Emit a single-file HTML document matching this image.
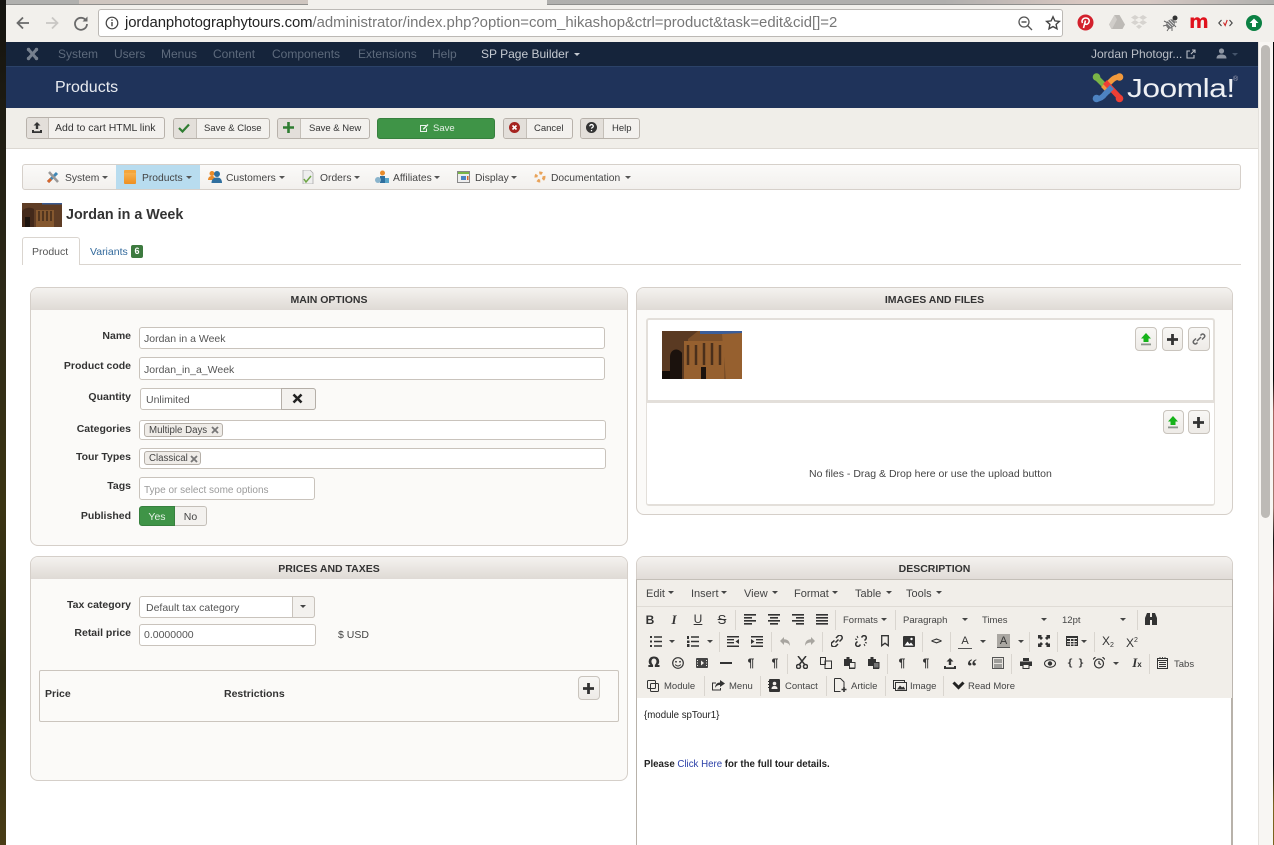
<!DOCTYPE html>
<html><head><meta charset="utf-8"><title>Products</title>
<style>
html,body{margin:0;padding:0;width:1274px;height:845px;overflow:hidden;background:#fff}
body{position:relative;font-family:"Liberation Sans",sans-serif;color:#333;font-size:11px}
div,span,svg{position:absolute;box-sizing:border-box}
.t{white-space:nowrap;line-height:12px;height:12px}
.b{font-weight:bold}
.nav{color:#5d6a7c;font-size:12px;top:48px}
.btn{background:#f3f1ee;border:1px solid #b8b2ab;border-radius:3px;height:21px;top:118px}
.ic{left:0;top:0;bottom:0;background:#e3dfda;border-right:1px solid #c4bfb8;border-radius:2px 0 0 2px;width:23px}
.panel{background:#fbfaf8;border:1px solid #d5cfc9;border-radius:8px;overflow:hidden}
.ph{left:0;right:0;top:0;height:22px;background:linear-gradient(#f4f2ef,#dfdad5);text-align:center;font-weight:bold;font-size:10.5px;line-height:24px;color:#333}
.inp{background:#fff;border:1px solid #c9c3bc;border-radius:3px}
.lb{font-weight:bold;font-size:10.5px;text-align:right;width:100px;left:31px;color:#333}
.val{font-size:10.5px;color:#555}
.tag{background:#efece8;border:1px solid #b5afa8;border-radius:3px;height:14px;font-size:9.7px;line-height:13px;padding-left:4px;color:#444;white-space:nowrap}
.sb{background:linear-gradient(#f8f7f5,#eeebe7);border:1px solid #c9c4bd;border-radius:4px;width:20px;height:24px}
.mt{font-size:11px;color:#444;top:588px}
.tb{font-size:9.5px;color:#444}
.sep{width:1px;background:#d9d5cf}
.i{font-size:12px;color:#333;line-height:14px;height:14px;width:16px;text-align:center;white-space:nowrap}
.mn{font-size:10.3px;color:#444;top:173px}
</style></head><body>

<!-- left photo strip -->
<div style="left:0;top:0;width:6px;height:845px;background:linear-gradient(#14130f,#2e2a18 35%,#3b3413 60%,#2c2a12 80%,#4a3d16)"></div>

<!-- browser top -->
<div style="left:6px;top:0;width:1268px;height:5px;background:linear-gradient(90deg,#b0b0ae 0,#b0afad 74%,#d9c8c2 85%,#d6c8c3 90%,#b0b0ae 100%);border-bottom:1px solid #8f8f8d"></div>
<div style="left:79px;top:0;width:229px;height:5px;background:#cfc6c0;border-bottom:1px solid #8f8f8d"></div>
<div style="left:308px;top:0;width:239px;height:5px;background:#f2f0ec"></div>
<div style="left:6px;top:5px;width:1268px;height:37px;background:#f2f0ec"></div>
<svg style="left:14px;top:14px" width="18" height="18" viewBox="0 0 18 18"><path d="M15 9H4M9 3.500L3.500 9 9 14.500" fill="none" stroke="#6a6a6a" stroke-width="1.800"/></svg>
<svg style="left:43px;top:14px" width="18" height="18" viewBox="0 0 18 18"><path d="M3 9h11M9 3.500L14.500 9 9 14.500" fill="none" stroke="#c9c7c4" stroke-width="1.800"/></svg>
<svg style="left:72px;top:14px" width="18" height="18" viewBox="0 0 18 18"><path d="M14 6.500A6 6 0 1 0 15 10" fill="none" stroke="#6a6a6a" stroke-width="1.800"/><path d="M15.500 2.500v5h-5z" fill="#6a6a6a"/></svg>
<div style="left:98px;top:9px;width:965px;height:28px;background:#fff;border:1px solid #bcb9b5;border-radius:3px"></div>
<svg style="left:105px;top:16px" width="14" height="14" viewBox="0 0 14 14"><circle cx="7" cy="7" r="5.800" fill="none" stroke="#444" stroke-width="1.200"/><path d="M7 6v4.200M7 3.500v1.400" stroke="#444" stroke-width="1.400"/></svg>
<div class="t" style="left:125px;top:14px;height:18px;line-height:18px;font-size:14.900px;color:#777"><span style="position:static;color:#222;letter-spacing:-.08px">jordanphotographytours.com</span>/administrator/index.php?option=com_hikashop&amp;ctrl=product&amp;task=edit&amp;cid[]=2</div>
<svg style="left:1017px;top:15px" width="16" height="16" viewBox="0 0 16 16"><circle cx="7" cy="7" r="5" fill="none" stroke="#555" stroke-width="1.300"/><path d="M4.500 7h5M10.500 10.500L15 15" stroke="#555" stroke-width="1.400"/></svg>
<svg style="left:1045px;top:15px" width="16" height="16" viewBox="0 0 16 16"><path d="M8 1.800l1.900 4.100 4.500.5-3.300 3 .9 4.400L8 11.600l-4 2.200.9-4.400-3.300-3 4.500-.5z" fill="none" stroke="#444" stroke-width="1.400"/></svg>
<!-- extensions -->
<svg style="left:1077px;top:14px" width="17" height="17" viewBox="0 0 17 17"><circle cx="8.500" cy="8.500" r="8" fill="#d3202c"/><path d="M6.500 14L8.500 6.500M5.500 9C4 6 6.500 4 8.800 4c2.500 0 3.800 1.700 3.300 3.800-.5 2.200-2.700 3.300-4 2" fill="none" stroke="#fff" stroke-width="1.500"/></svg>
<svg style="left:1109px;top:15px" width="16" height="14" viewBox="0 0 16 14"><path d="M5.500 0h5l5.500 9.500-2.500 4.500h-11L0 9.500z" fill="#bdbab6"/><path d="M5.500 0L8 4.500 3 14 0 9.500z" fill="#d0cdc9"/></svg>
<svg style="left:1131px;top:15px" width="16" height="15" viewBox="0 0 16 15" fill="#d6d3cf"><path d="M4 0l4 2.500L4 5 0 2.500zM12 0l4 2.500L12 5 8 2.500zM4 5l4 2.500L4 10 0 7.500zM12 5l4 2.500L12 10 8 7.500zM8 9.500l3 2-3 2.500-3-2.500z"/></svg>
<svg style="left:1162px;top:13px" width="18" height="19" viewBox="0 0 18 19"><ellipse cx="8.500" cy="11" rx="4" ry="5" transform="rotate(35 8.500 11)" fill="#777"/><path d="M6 8l5 5M5 10l4 4M8 7l4 4" stroke="#eee" stroke-width=".7"/><circle cx="13" cy="5" r="2.500" fill="#333"/><path d="M2 8l4 2M1 13l4-1M5 18l2-3M10 18l0-3M14 14l-2-2M15 9l-3 0" stroke="#666" fill="none"/></svg>
<div class="t b" style="left:1189px;top:12px;font-size:19px;height:20px;line-height:20px;color:#e0121d;font-family:'DejaVu Sans',sans-serif">m</div>
<svg style="left:1218px;top:19px" width="15" height="8" viewBox="0 0 15 8" fill="none" stroke-width="1.100"><path d="M3.500 1L.8 4l2.700 3M11.500 1l2.700 3-2.700 3" stroke="#444"/><path d="M5.500 3.500l1.700 3 2-5.500" stroke="#c22"/></svg>
<svg style="left:1246px;top:15px" width="16" height="16" viewBox="0 0 16 16"><circle cx="8" cy="8" r="8" fill="#0b8043"/><path d="M8 3.500L12.500 8H10v4H6V8H3.500z" fill="#fff"/></svg>

<!-- joomla nav -->
<div style="left:6px;top:42px;width:1252px;height:25px;background:#15243b;border-bottom:1px solid #2b4268"></div>
<svg style="left:26px;top:47px" width="13" height="14" viewBox="0 0 13 14"><path d="M2.500 2.500l8 9M10.500 2.500l-8 9" stroke="#76808e" stroke-width="3"/><circle cx="2.500" cy="2.500" r="1.700" fill="#76808e"/><circle cx="10.500" cy="2.500" r="1.700" fill="#76808e"/><circle cx="2.500" cy="11.500" r="1.700" fill="#76808e"/><circle cx="10.500" cy="11.500" r="1.700" fill="#76808e"/></svg>
<div class="t nav" style="left:58px">System</div>
<div class="t nav" style="left:114px">Users</div>
<div class="t nav" style="left:161px">Menus</div>
<div class="t nav" style="left:213px">Content</div>
<div class="t nav" style="left:272px">Components</div>
<div class="t nav" style="left:358px">Extensions</div>
<div class="t nav" style="left:432px">Help</div>
<div class="t nav" style="left:481px;color:#c5cad1">SP Page Builder</div>
<div style="left:574px;top:53px;width:0;height:0;border:3px solid transparent;border-top:3px solid #c5cad1;border-bottom:0"></div>
<div class="t nav" style="color:#b9bec6;left:1091px">Jordan Photogr...</div>
<svg style="left:1186px;top:49px" width="10" height="10" viewBox="0 0 10 10"><path d="M4 2H1v7h7V6M5 5l4-4M6 1h3v3" fill="none" stroke="#b9bec6" stroke-width="1.100"/></svg>
<svg style="left:1216px;top:48px" width="11" height="11" viewBox="0 0 11 11"><circle cx="5.500" cy="3" r="2.600" fill="#8d95a2"/><path d="M0.500 10.500c0-3 2-4 5-4s5 1 5 4z" fill="#8d95a2"/></svg>
<div style="left:1232px;top:53px;width:0;height:0;border:3px solid transparent;border-top:3px solid #44546b;border-bottom:0"></div>

<!-- header -->
<div style="left:6px;top:67px;width:1252px;height:41px;background:#1f335a"></div>
<div class="t" style="left:55px;top:79px;font-size:16px;height:18px;line-height:18px;color:#e8ebf0">Products</div>
<svg style="left:1092px;top:72px" width="32" height="31" viewBox="0 0 32 31" fill="none" stroke-width="5.500"><path d="M4 5l15 15" stroke="#7ab547"/><path d="M27 5c-4 0-6 2-9 5l-7 7" stroke="#f29a3c"/><path d="M28 26L13 10" stroke="#ee3f35"/><path d="M4 27c4 0 7-2 9-5l7-7" stroke="#4d83c2"/><circle cx="4.500" cy="5" r="3.800" fill="#7ab547" stroke="none"/><circle cx="27.500" cy="5" r="3.800" fill="#f29a3c" stroke="none"/><circle cx="27.500" cy="26.500" r="3.800" fill="#ee3f35" stroke="none"/><circle cx="4.500" cy="26.500" r="3.800" fill="#4d83c2" stroke="none"/></svg>
<div class="t" style="left:1127px;top:74px;height:28px;line-height:28px;font-size:26px;color:#eef0f4;transform:scaleX(1.22);transform-origin:left center;letter-spacing:-.4px">Joomla!</div>
<div class="t" style="left:1233px;top:76px;font-size:7px;height:8px;line-height:8px;color:#aab">®</div>

<!-- toolbar -->
<div style="left:6px;top:108px;width:1252px;height:41px;background:#f0eee9;border-bottom:1px solid #dcd8d2"></div>
<div class="btn" style="left:26px;top:117px;width:139px;height:22px"><div class="ic" style="width:22px"></div></div>
<svg style="left:31px;top:122px" width="12" height="11" viewBox="0 0 12 11"><path d="M6 0l3.500 3.500H7.200V7H4.800V3.500H2.500zM1 8h2v1.200h6V8h2v3H1z" fill="#333"/></svg>
<div class="t" style="left:55px;top:122px;font-size:10.500px">Add to cart HTML link</div>
<div class="btn" style="left:173px;width:97px"><div class="ic"></div></div>
<svg style="left:178px;top:123px" width="12" height="10" viewBox="0 0 12 10"><path d="M1 5l3.500 3.500L11 1.500" fill="none" stroke="#2f7d32" stroke-width="2.200"/></svg>
<div class="t" style="left:204px;top:123px;font-size:9.500px">Save &amp; Close</div>
<div class="btn" style="left:277px;width:93px"><div class="ic"></div></div>
<svg style="left:283px;top:122px" width="11" height="11" viewBox="0 0 11 11"><path d="M5.500 0v11M0 5.500h11" stroke="#2f7d32" stroke-width="2.600"/></svg>
<div class="t" style="left:309px;top:123px;font-size:9.500px">Save &amp; New</div>
<div class="btn" style="left:377px;width:118px;background:#3f9447;border-color:#37803e"></div>
<svg style="left:419px;top:123px" width="10" height="10" viewBox="0 0 10 10"><path d="M1 2h6v1H2v5h5V6l1-1v4H1z" fill="#eaf3eb"/><path d="M4 5.500L8.500 1 9.500 2 5 6.500H4z" fill="#eaf3eb"/></svg>
<div class="t" style="left:433px;top:123px;font-size:9.500px;color:#e6f1e7">Save</div>
<div class="btn" style="left:503px;width:70px"><div class="ic"></div></div>
<svg style="left:509px;top:122px" width="11" height="11" viewBox="0 0 11 11"><circle cx="5.500" cy="5.500" r="5.500" fill="#a5231f"/><path d="M3.500 3.500l4 4M7.500 3.500l-4 4" stroke="#fff" stroke-width="1.600"/></svg>
<div class="t" style="left:534px;top:123px;font-size:9.500px">Cancel</div>
<div class="btn" style="left:580px;width:60px"><div class="ic"></div></div>
<svg style="left:586px;top:122px" width="11" height="11" viewBox="0 0 11 11"><circle cx="5.500" cy="5.500" r="5.500" fill="#333"/><path d="M3.800 4.200c0-2.200 3.500-2.200 3.500 0 0 1.300-1.800 1.300-1.800 2.400M5.500 8v1.200" stroke="#fff" stroke-width="1.300" fill="none"/></svg>
<div class="t" style="left:612px;top:123px;font-size:9.500px">Help</div>

<!-- hikashop menu -->
<div style="left:22px;top:164px;width:1219px;height:26px;background:linear-gradient(#fbfaf9,#f2f0ed);border:1px solid #d6d0ca;border-radius:3px"></div>
<div style="left:116px;top:165px;width:84px;height:24px;background:#b8dcef"></div>
<svg style="left:46px;top:170px" width="14" height="14" viewBox="0 0 14 14"><path d="M2 12L11 3" stroke="#3f87b5" stroke-width="3"/><path d="M3 2l9 10" stroke="#999" stroke-width="2.500"/><path d="M2 12l3-3" stroke="#d9662a" stroke-width="3"/></svg>
<div class="t mn" style="left:65px">System</div><div style="left:102px;top:176px;border:3px solid transparent;border-top-color:#555;border-bottom:0"></div>
<div style="left:124px;top:170px;width:12px;height:14px;background:linear-gradient(#f7b24f,#ee8f22);border-radius:1px;border-top:3px solid #f5a63c"></div>
<div class="t mn" style="left:142px">Products</div><div style="left:186px;top:176px;border:3px solid transparent;border-top-color:#555;border-bottom:0"></div>
<svg style="left:208px;top:170px" width="14" height="13" viewBox="0 0 14 13"><circle cx="4" cy="3.500" r="2.500" fill="#e98b2a"/><path d="M0 10c0-3 2-4 4-4s3 1 3 4z" fill="#e98b2a"/><circle cx="9" cy="4" r="3" fill="#2f6f9e"/><path d="M3.500 13c0-4 2.500-5.500 5.500-5.500s5 1.500 5 5.500z" fill="#2f6f9e"/></svg>
<div class="t mn" style="left:226px">Customers</div><div style="left:279px;top:176px;border:3px solid transparent;border-top-color:#555;border-bottom:0"></div>
<svg style="left:302px;top:170px" width="12" height="14" viewBox="0 0 12 14"><path d="M1 0h7l3 3v11H1z" fill="#eee" stroke="#aaa" stroke-width=".8"/><path d="M2 9l2 3 5-6" stroke="#6da544" stroke-width="1.500" fill="none"/></svg>
<div class="t mn" style="left:320px">Orders</div><div style="left:354px;top:176px;border:3px solid transparent;border-top-color:#555;border-bottom:0"></div>
<svg style="left:375px;top:170px" width="14" height="14" viewBox="0 0 14 14"><circle cx="7.500" cy="3" r="2.500" fill="#e98b2a"/><path d="M5 13V6h5v7z" fill="#2f6f9e"/><path d="M10 13V8h4v5z" fill="#5aa5c8"/><circle cx="3" cy="10" r="3" fill="#8ab4cc"/></svg>
<div class="t mn" style="left:393px">Affiliates</div><div style="left:434px;top:176px;border:3px solid transparent;border-top-color:#555;border-bottom:0"></div>
<svg style="left:457px;top:171px" width="13" height="12" viewBox="0 0 13 12"><rect x=".5" y=".5" width="12" height="11" fill="#eee" stroke="#888"/><rect x="1" y="1" width="11" height="2" fill="#7ab547"/><rect x="4" y="5" width="5" height="4" fill="#4d83c2"/><rect x="10" y="5" width="1.500" height="4" fill="#d9662a"/></svg>
<div class="t mn" style="left:475px">Display</div><div style="left:511px;top:176px;border:3px solid transparent;border-top-color:#555;border-bottom:0"></div>
<svg style="left:534px;top:171px" width="12" height="12" viewBox="0 0 12 12"><circle cx="6" cy="6" r="4" fill="none" stroke="#e9a35a" stroke-width="3" stroke-dasharray="3 3"/></svg>
<div class="t mn" style="left:551px">Documentation</div><div style="left:625px;top:176px;border:3px solid transparent;border-top-color:#555;border-bottom:0"></div>

<!-- title -->
<svg style="left:22px;top:203px" width="40" height="24" viewBox="0 0 40 24"><rect width="40" height="24" fill="#5f3d25"/><rect x="20" width="20" height="1.500" fill="#3a5a90"/><path d="M0 24V8c4-4 8-4 12-2v18z" fill="#43291a"/><rect x="14" y="7" width="18" height="17" fill="#85582f"/><path d="M17 8v10M21 8v10M25 8v10M29 8v10" stroke="#3d2717" stroke-width="1.400"/><path d="M3 24V14h5v10z" fill="#1c130e"/></svg>
<div class="t b" style="left:66px;top:207px;font-size:14.300px;height:16px;line-height:16px;color:#333">Jordan in a Week</div>

<!-- tabs -->
<div style="left:22px;top:264px;width:1219px;height:1px;background:#dad5cf"></div>
<div style="left:22px;top:237px;width:58px;height:28px;background:#fff;border:1px solid #dad5cf;border-bottom:0;border-radius:3px 3px 0 0"></div>
<div class="t" style="left:32px;top:246px;font-size:10.500px;color:#555">Product</div>
<div class="t" style="left:90px;top:246px;font-size:10.500px;color:#336a9c">Variants</div>
<div style="left:131px;top:245px;width:12px;height:13px;background:#3d7a3f;border-radius:2px;color:#fff;font-size:9px;line-height:13px;text-align:center;font-weight:bold">6</div>

<!-- MAIN OPTIONS -->
<div class="panel" style="left:30px;top:287px;width:598px;height:259px"><div class="ph">MAIN OPTIONS</div></div>
<div class="t lb" style="top:330px">Name</div>
<div class="inp" style="left:139px;top:327px;width:466px;height:22px"></div>
<div class="t val" style="left:144px;top:333px">Jordan in a Week</div>
<div class="t lb" style="top:360px">Product code</div>
<div class="inp" style="left:139px;top:357px;width:466px;height:23px"></div>
<div class="t val" style="left:144px;top:364px">Jordan_in_a_Week</div>
<div class="t lb" style="top:391px">Quantity</div>
<div class="inp" style="left:140px;top:388px;width:176px;height:22px"></div>
<div class="t val" style="left:146px;top:394px">Unlimited</div>
<div style="left:281px;top:388px;width:35px;height:22px;background:#f3f1ee;border:1px solid #b5afa8;border-radius:0 3px 3px 0"></div>
<svg style="left:292px;top:393px" width="11" height="11" viewBox="0 0 11 11"><path d="M1.500 1.500l8 8M9.500 1.500l-8 8" stroke="#222" stroke-width="2.600"/></svg>
<div class="t lb" style="top:423px">Categories</div>
<div class="inp" style="left:139px;top:420px;width:467px;height:20px"></div>
<div class="tag" style="left:144px;top:423px;width:79px">Multiple Days</div>
<svg style="left:211px;top:426px" width="8" height="8" viewBox="0 0 8 8"><path d="M1 1l6 6M7 1L1 7" stroke="#777" stroke-width="1.800"/></svg>
<div class="t lb" style="top:451px">Tour Types</div>
<div class="inp" style="left:139px;top:448px;width:467px;height:21px"></div>
<div class="tag" style="left:144px;top:451px;width:57px">Classical</div>
<svg style="left:190px;top:455px" width="8" height="8" viewBox="0 0 8 8"><path d="M1 1l6 6M7 1L1 7" stroke="#777" stroke-width="1.800"/></svg>
<div class="t lb" style="top:480px">Tags</div>
<div class="inp" style="left:139px;top:477px;width:176px;height:23px"></div>
<div class="t val" style="left:144px;top:485px;color:#9a9a9a;font-size:10px">Type or select some options</div>
<div class="t lb" style="top:510px">Published</div>
<div style="left:139px;top:506px;width:36px;height:20px;background:#3f9447;border:1px solid #37803e;border-radius:3px 0 0 3px;color:#e6f1e7;text-align:center;font-size:10.500px;line-height:20px">Yes</div>
<div style="left:175px;top:506px;width:32px;height:20px;background:#f3f1ee;border:1px solid #c4bfb8;border-left:0;border-radius:0 3px 3px 0;color:#444;text-align:center;font-size:10.500px;line-height:20px">No</div>

<!-- IMAGES AND FILES -->
<div class="panel" style="left:636px;top:287px;width:597px;height:228px"><div class="ph">IMAGES AND FILES</div></div>
<div style="left:646px;top:318px;width:569px;height:84px;background:#fff;border:2px solid #e3dfda;border-radius:3px 3px 0 0"></div>
<div style="left:646px;top:400px;width:569px;height:106px;background:#fff;border:1px solid #e3dfda;border-top:3px solid #e3dfda;border-bottom-width:2px;border-radius:0 0 3px 3px"></div>
<svg style="left:662px;top:331px" width="80" height="48" viewBox="0 0 80 48"><rect width="80" height="48" fill="#7d5029"/><rect x="38" width="42" height="3" fill="#3b5e9a"/><path d="M0 0h36l-10 8v40H0z" fill="#5a3a22"/><path d="M60 3L80 2v46H64z" fill="#96602f"/><rect x="22" y="10" width="40" height="38" fill="#96602f"/><path d="M26 14v20M34 14v20M42 12v22M50 12v22M58 14v20" stroke="#4a2f1b" stroke-width="2.500"/><rect x="39" y="36" width="5" height="12" fill="#1c130e"/><path d="M8 48V26c0-8 8-10 12-4v26z" fill="#1b120d"/><rect y="40" width="8" height="8" fill="#120c08"/></svg>
<div class="sb" style="left:1135px;top:327px;width:22px"></div>
<svg style="left:1140px;top:333px" width="12" height="13" viewBox="0 0 12 13"><path d="M6 0l5 5.500H8.500V9h-5V5.500H1z" fill="#16b31a"/><rect x="1" y="10.500" width="10" height="1.800" fill="#8a948a"/></svg>
<div class="sb" style="left:1162px;top:327px;width:21px"></div>
<svg style="left:1167px;top:334px" width="11" height="11" viewBox="0 0 11 11"><path d="M5.500 0v11M0 5.500h11" stroke="#333" stroke-width="2.800"/></svg>
<div class="sb" style="left:1188px;top:327px;width:22px"></div>
<svg style="left:1192px;top:332px" width="14" height="14" viewBox="0 0 14 14"><path d="M5.500 10.500l-1 1a2 2 0 0 1-2.800-2.800L4 6.500M8.500 3.500l1-1a2 2 0 0 1 2.800 2.800L10 7.500M5 9l4-4" fill="none" stroke="#666" stroke-width="1.500"/></svg>
<div class="sb" style="left:1163px;top:410px;width:21px"></div>
<svg style="left:1167px;top:416px" width="12" height="13" viewBox="0 0 12 13"><path d="M6 0l5 5.500H8.500V9h-5V5.500H1z" fill="#16b31a"/><rect x="1" y="10.500" width="10" height="1.800" fill="#8a948a"/></svg>
<div class="sb" style="left:1188px;top:410px;width:22px"></div>
<svg style="left:1193px;top:417px" width="11" height="11" viewBox="0 0 11 11"><path d="M5.500 0v11M0 5.500h11" stroke="#333" stroke-width="2.800"/></svg>
<div class="t" style="left:809px;top:468px;font-size:10.500px;color:#444">No files - Drag &amp; Drop here or use the upload button</div>

<!-- PRICES -->
<div class="panel" style="left:30px;top:556px;width:598px;height:225px"><div class="ph">PRICES AND TAXES</div></div>
<div class="t lb" style="top:599px">Tax category</div>
<div class="inp" style="left:139px;top:596px;width:176px;height:22px"></div>
<div class="t val" style="left:146px;top:602px">Default tax category</div>
<div style="left:292px;top:596px;width:23px;height:22px;background:#f3f1ee;border:1px solid #c9c3bc;border-radius:0 3px 3px 0"></div>
<div style="left:300px;top:605px;border:3px solid transparent;border-top-color:#444;border-bottom:0"></div>
<div class="t lb" style="top:627px">Retail price</div>
<div class="inp" style="left:139px;top:624px;width:177px;height:22px"></div>
<div class="t val" style="left:144px;top:629px">0.0000000</div>
<div class="t val" style="left:338px;top:629px;color:#444">$ USD</div>
<div style="left:39px;top:670px;width:580px;height:52px;border:1px solid #cbc5be;border-radius:2px"></div>
<div class="t b" style="left:45px;top:688px;font-size:10.500px">Price</div>
<div class="t b" style="left:224px;top:688px;font-size:10.500px">Restrictions</div>
<div class="sb" style="left:578px;top:676px;width:22px"></div>
<svg style="left:583px;top:683px" width="11" height="11" viewBox="0 0 11 11"><path d="M5.500 0v11M0 5.500h11" stroke="#333" stroke-width="2.800"/></svg>

<!-- DESCRIPTION -->
<div class="panel" style="left:636px;top:556px;width:597px;height:320px;border-bottom:0;border-radius:8px 8px 0 0"><div class="ph" style="height:24px">DESCRIPTION</div></div>
<div style="left:636px;top:579px;width:597px;height:120px;background:#f1eee9;border:1px solid #bcb6af;border-bottom:1px solid #d6d2cc;border-top-color:#c4bfb8"></div>
<div style="left:637px;top:606px;width:595px;height:1px;background:#dfdbd5"></div>
<div style="left:636px;top:698px;width:597px;height:147px;background:#fff;border-left:1px solid #b8b2aa;border-right:2px solid #b8b2aa"></div>

<div class="t mt" style="left:646px">Edit</div><div style="left:668px;top:591px;border:3.500px solid transparent;border-top-color:#444;border-bottom:0"></div>
<div class="t mt" style="left:691px">Insert</div><div style="left:721px;top:591px;border:3.500px solid transparent;border-top-color:#444;border-bottom:0"></div>
<div class="t mt" style="left:744px">View</div><div style="left:772px;top:591px;border:3.500px solid transparent;border-top-color:#444;border-bottom:0"></div>
<div class="t mt" style="left:794px">Format</div><div style="left:832px;top:591px;border:3.500px solid transparent;border-top-color:#444;border-bottom:0"></div>
<div class="t mt" style="left:855px">Table</div><div style="left:886px;top:591px;border:3.500px solid transparent;border-top-color:#444;border-bottom:0"></div>
<div class="t mt" style="left:906px">Tools</div><div style="left:936px;top:591px;border:3.500px solid transparent;border-top-color:#444;border-bottom:0"></div>

<!-- row 1 -->
<div class="i b" style="left:642px;top:613px;font-size:12px">B</div>
<div class="i b" style="left:666px;top:613px;font-size:13px;font-style:italic;font-family:'Liberation Serif',serif">I</div>
<div class="i" style="left:690px;top:612px;font-size:12px;text-decoration:underline">U</div>
<div class="i" style="left:714px;top:613px;font-size:13px;text-decoration:line-through">S</div>
<div class="sep" style="left:735px;top:610px;height:20px"></div>
<svg style="left:744px;top:614px" width="84" height="11" viewBox="0 0 84 11" fill="#333"><path d="M0 0h12v1.600H0zM0 3h8v1.600H0zM0 6h12v1.600H0zM0 9h8v1.600H0z"/><path d="M24 0h12v1.600H24zM26 3h8v1.600h-8zM24 6h12v1.600H24zM26 9h8v1.600h-8z"/><path d="M48 0h12v1.600H48zM52 3h8v1.600h-8zM48 6h12v1.600H48zM52 9h8v1.600h-8z"/><path d="M72 0h12v1.600H72zM72 3h12v1.600H72zM72 6h12v1.600H72zM72 9h12v1.600H72z"/></svg>
<div class="sep" style="left:835px;top:610px;height:20px"></div>
<div class="t tb" style="left:843px;top:615px">Formats</div><div style="left:881px;top:618px;border:3px solid transparent;border-top-color:#444;border-bottom:0"></div>
<div class="sep" style="left:895px;top:610px;height:20px"></div>
<div class="t tb" style="left:903px;top:615px">Paragraph</div><div style="left:962px;top:618px;border:3px solid transparent;border-top-color:#444;border-bottom:0"></div>
<div class="t tb" style="left:982px;top:615px">Times</div><div style="left:1041px;top:618px;border:3px solid transparent;border-top-color:#444;border-bottom:0"></div>
<div class="t tb" style="left:1062px;top:615px">12pt</div><div style="left:1120px;top:618px;border:3px solid transparent;border-top-color:#444;border-bottom:0"></div>
<div class="sep" style="left:1137px;top:610px;height:20px"></div>
<svg style="left:1145px;top:613px" width="12" height="12" viewBox="0 0 12 12" fill="#333"><path d="M2 0h3v12H0V5zM7 0h3l2 5v7H7z"/><rect x="4" y="4" width="4" height="3"/></svg>

<!-- row 2 -->
<svg style="left:650px;top:636px" width="12" height="11" viewBox="0 0 12 11" fill="#333"><path d="M0 0h2v2H0zM0 4.500h2v2H0zM0 9h2v2H0zM4 .3h8v1.400H4zM4 4.800h8v1.400H4zM4 9.300h8v1.400H4z"/></svg>
<div style="left:669px;top:640px;border:3px solid transparent;border-top-color:#444;border-bottom:0"></div>
<svg style="left:687px;top:636px" width="12" height="11" viewBox="0 0 12 11" fill="#333"><path d="M0 0h2v3H0zM0 4.500h2.500v2.500H0zM0 8h2.500v3H0zM4 .3h8v1.400H4zM4 4.800h8v1.400H4zM4 9.300h8v1.400H4z"/></svg>
<div style="left:707px;top:640px;border:3px solid transparent;border-top-color:#444;border-bottom:0"></div>
<div class="sep" style="left:719px;top:632px;height:20px"></div>
<svg style="left:727px;top:636px" width="12" height="11" viewBox="0 0 12 11" fill="#333"><path d="M0 0h12v1.500H0zM0 9.500h12V11H0zM0 3h7v1.400H0zM0 6h7v1.400H0zM12 3v5L8.500 5.500z"/></svg>
<svg style="left:751px;top:636px" width="12" height="11" viewBox="0 0 12 11" fill="#333"><path d="M0 0h12v1.500H0zM0 9.500h12V11H0zM5 3h7v1.400H5zM5 6h7v1.400H5zM0 3v5l3.500-2.500z"/></svg>
<div class="sep" style="left:771px;top:632px;height:20px"></div>
<svg style="left:780px;top:637px" width="10" height="9" viewBox="0 0 10 9"><path d="M4 0v2.200c3.500 0 6 1.800 6 6.800C8.800 6.500 7 5.500 4 5.500V8L0 4z" fill="#a8a5a0"/></svg>
<svg style="left:805px;top:637px" width="10" height="9" viewBox="0 0 10 9"><path d="M6 0v2.200C2.500 2.200 0 4 0 9c1.200-2.500 3-3.500 6-3.500V8l4-4z" fill="#a8a5a0"/></svg>
<div class="sep" style="left:822px;top:632px;height:20px"></div>
<svg style="left:831px;top:635px" width="12" height="12" viewBox="0 0 12 12"><path d="M4.500 7.500l3-3M5 3l2-2a2 2 0 0 1 3.500 3.500L8.500 6.500M7 9l-2 2A2 2 0 0 1 1 7.500L3.500 5.500" fill="none" stroke="#333" stroke-width="1.500"/></svg>
<svg style="left:855px;top:635px" width="12" height="12" viewBox="0 0 12 12"><path d="M6.500 2.500l1-1.200a2 2 0 0 1 3.200 3L9.500 5.500M5.500 9.500l-1 1.200a2 2 0 0 1-3.200-3L2.500 6.500" fill="none" stroke="#333" stroke-width="1.500"/><path d="M2 1l1 2M0 4l2 .5M10 11l-1-2M12 8l-2-.5" stroke="#333"/></svg>
<svg style="left:881px;top:635px" width="8" height="12" viewBox="0 0 8 12"><path d="M.7.700h6.600v10L4 8.200.7 10.700z" fill="none" stroke="#333" stroke-width="1.300"/></svg>
<svg style="left:903px;top:636px" width="12" height="11" viewBox="0 0 12 11"><rect width="12" height="11" rx="1" fill="#333"/><path d="M1.500 9.500l3-4 2 2.500 1.500-1.500 2.500 3z" fill="#fff"/><circle cx="8.500" cy="3" r="1.200" fill="#fff"/></svg>
<div class="sep" style="left:922px;top:632px;height:20px"></div>
<div class="t b" style="left:931px;top:636px;font-size:10px;font-family:'DejaVu Sans Mono',monospace;letter-spacing:-1px">&lt;&gt;</div>
<div class="sep" style="left:950px;top:632px;height:20px"></div>
<div class="i" style="left:958px;top:634px;font-size:11px;border-bottom:1px solid #555;height:15px;width:14px">A</div>
<div style="left:980px;top:640px;border:3px solid transparent;border-top-color:#444;border-bottom:0"></div>
<div class="i" style="left:997px;top:634px;font-size:11px;background:#aaa7a2;border-bottom:1px solid #555;width:13px;height:14px">A</div>
<div style="left:1018px;top:640px;border:3px solid transparent;border-top-color:#444;border-bottom:0"></div>
<div class="sep" style="left:1029px;top:632px;height:20px"></div>
<svg style="left:1038px;top:635px" width="12" height="12" viewBox="0 0 12 12" fill="#333"><path d="M0 0h4L3 1l2 2-2 2-2-2-1 1zM12 0v4l-1-1-2 2-2-2 2-2-1-1zM0 12V8l1 1 2-2 2 2-2 2 1 1zM12 12H8l1-1-2-2 2-2 2 2 1-1z"/></svg>
<div class="sep" style="left:1057px;top:632px;height:20px"></div>
<svg style="left:1066px;top:636px" width="12" height="10" viewBox="0 0 12 10"><rect width="12" height="10" fill="#333"/><path d="M1 2.500h10M1 5.500h10M1 8h10M4.500 2v8M8 2v8" stroke="#f1eee9" stroke-width=".9"/></svg>
<div style="left:1081px;top:640px;border:3px solid transparent;border-top-color:#444;border-bottom:0"></div>
<div class="sep" style="left:1094px;top:632px;height:20px"></div>
<div class="t" style="left:1102px;top:635px;font-size:12px;color:#333">X<span style="position:static;font-size:7px;vertical-align:-2px">2</span></div>
<div class="t" style="left:1126px;top:635px;font-size:12px;color:#333">X<span style="position:static;font-size:7px;vertical-align:5px">2</span></div>

<!-- row 3 -->
<div class="i b" style="left:646px;top:656px;font-size:14px;font-family:'DejaVu Sans',sans-serif">Ω</div>
<svg style="left:672px;top:657px" width="12" height="12" viewBox="0 0 12 12"><circle cx="6" cy="6" r="5.300" fill="none" stroke="#333" stroke-width="1.200"/><circle cx="4" cy="4.800" r=".9" fill="#333"/><circle cx="8" cy="4.800" r=".9" fill="#333"/><path d="M3.300 7.500c1.300 2 4 2 5.400 0" fill="none" stroke="#333"/></svg>
<svg style="left:696px;top:658px" width="12" height="10" viewBox="0 0 12 10"><rect width="12" height="10" rx="1" fill="#444"/><path d="M5 2.500l3 2.500-3 2.500z" fill="#f1eee9"/><path d="M1.500 2v1M1.500 4.500v1M1.500 7v1M10.500 2v1M10.500 4.500v1M10.500 7v1" stroke="#f1eee9"/></svg>
<div style="left:720px;top:662px;width:12px;height:2px;background:#333"></div>
<div class="i b" style="left:743px;top:656px;font-size:12px">¶</div>
<div class="i b" style="left:767px;top:656px;font-size:12px">¶</div>
<div class="sep" style="left:787px;top:654px;height:20px"></div>
<svg style="left:796px;top:656px" width="12" height="13" viewBox="0 0 12 13"><path d="M2 0l7 9M10 0L3 9" stroke="#333" stroke-width="1.500"/><circle cx="2.500" cy="10.500" r="2" fill="none" stroke="#333" stroke-width="1.500"/><circle cx="9.500" cy="10.500" r="2" fill="none" stroke="#333" stroke-width="1.500"/></svg>
<svg style="left:820px;top:657px" width="12" height="12" viewBox="0 0 12 12"><path d="M.5.500h5v7h-5zM5 4h6.500v7.500H5z" fill="#f1eee9" stroke="#333"/></svg>
<svg style="left:844px;top:657px" width="12" height="12" viewBox="0 0 12 12"><path d="M0 2h8v3h3v7H5V9H0z" fill="#333"/><rect x="5.500" y="5.500" width="5.500" height="5.500" fill="#f1eee9" stroke="#333"/><rect x="2.500" y="0" width="3" height="3" fill="#333"/></svg>
<svg style="left:868px;top:657px" width="12" height="12" viewBox="0 0 12 12"><path d="M0 2h8v3h3v7H5V9H0z" fill="#333"/><rect x="5.500" y="5.500" width="5.500" height="5.500" fill="#777" stroke="#333"/><rect x="2.500" y="0" width="3" height="3" fill="#333"/></svg>
<div class="sep" style="left:887px;top:654px;height:20px"></div>
<div class="i b" style="left:894px;top:656px;font-size:12px">¶</div>
<div class="i b" style="left:918px;top:656px;font-size:12px">¶</div>
<svg style="left:944px;top:658px" width="12" height="11" viewBox="0 0 12 11"><path d="M6 0l3.500 3.500H7.200V7H4.800V3.500H2.500zM0 8h2v1.200h8V8h2v3H0z" fill="#333"/></svg>
<div class="t b" style="left:967px;top:657px;font-size:20px;height:20px;line-height:20px;font-family:'Liberation Serif',serif">“</div>
<svg style="left:992px;top:657px" width="12" height="12" viewBox="0 0 12 12"><rect x=".5" y=".5" width="11" height="11" fill="#e8e5e0" stroke="#555"/><path d="M2 3h8M2 5h8M2 8h8M2 10h8" stroke="#555"/></svg>
<div class="sep" style="left:1011px;top:654px;height:20px"></div>
<svg style="left:1020px;top:658px" width="12" height="11" viewBox="0 0 12 11"><path d="M3 0h6v3H3zM0 3.500h12V8h-2.500v3h-7V8H0z" fill="#333"/><rect x="3.500" y="7" width="5" height="3" fill="#f1eee9"/></svg>
<svg style="left:1044px;top:659px" width="12" height="9" viewBox="0 0 12 9"><ellipse cx="6" cy="4.500" rx="5.500" ry="3.800" fill="none" stroke="#333" stroke-width="1.100"/><circle cx="6" cy="4.500" r="2.200" fill="#333"/></svg>
<div class="t b" style="left:1067px;top:658px;font-size:10px;height:12px;font-family:'DejaVu Sans Mono',monospace;letter-spacing:-.5px">{ }</div>
<svg style="left:1093px;top:657px" width="12" height="12" viewBox="0 0 12 12"><circle cx="6" cy="6.500" r="4.500" fill="none" stroke="#333" stroke-width="1.200"/><path d="M6 4v2.500l2 1M0 2.500L2.500 0M12 2.500L9.500 0" fill="none" stroke="#333" stroke-width="1.200"/></svg>
<div style="left:1113px;top:662px;border:3px solid transparent;border-top-color:#444;border-bottom:0"></div>
<div class="i b" style="left:1129px;top:656px;font-size:13px;font-style:italic;font-family:'Liberation Serif',serif">I<span style="position:static;font-size:8px;font-style:normal;font-family:'Liberation Sans'">x</span></div>
<div class="sep" style="left:1149px;top:654px;height:20px"></div>
<svg style="left:1157px;top:657px" width="11" height="12" viewBox="0 0 11 12"><rect x=".5" y="1.500" width="10" height="10" fill="none" stroke="#333"/><path d="M.5 3.500h10M2 5.500h7M2 7.500h7M2 9.500h7M3 0v2M5.500 0v2M8 0v2" stroke="#333" stroke-width=".9"/></svg>
<div class="t tb" style="left:1174px;top:659px">Tabs</div>

<!-- row 4 -->
<svg style="left:647px;top:680px" width="12" height="12" viewBox="0 0 12 12" fill="none" stroke="#333"><rect x=".5" y=".5" width="8" height="8" rx="1"/><rect x="3.500" y="3.500" width="8" height="8" rx="1"/></svg>
<div class="t tb" style="left:664px;top:681px">Module</div>
<div class="sep" style="left:704px;top:676px;height:20px"></div>
<svg style="left:711px;top:680px" width="14" height="11" viewBox="0 0 14 11"><path d="M1 2.500h4v1H2v6h7V8h1v2.500H1z" fill="#333"/><path d="M9 0l5 3.500L9 7V5C7 5 5.500 5.500 4 8c.3-4 2.500-5.500 5-5.500z" fill="#333"/></svg>
<div class="t tb" style="left:729px;top:681px">Menu</div>
<div class="sep" style="left:760px;top:676px;height:20px"></div>
<svg style="left:768px;top:679px" width="12" height="13" viewBox="0 0 12 13"><rect x="1" width="11" height="13" rx="1" fill="#333"/><circle cx="6.500" cy="4.500" r="1.800" fill="#f1eee9"/><path d="M3.500 10c0-2.500 1.500-3 3-3s3 .5 3 3z" fill="#f1eee9"/><path d="M0 2.500h2M0 5.500h2M0 8.500h2" stroke="#333"/></svg>
<div class="t tb" style="left:785px;top:681px">Contact</div>
<div class="sep" style="left:826px;top:676px;height:20px"></div>
<svg style="left:834px;top:678px" width="14" height="15" viewBox="0 0 14 15"><path d="M.5.500h6l3.500 3.500v5M.5.500v13h6" fill="none" stroke="#333"/><path d="M10 9v5M7.500 11.500h5" stroke="#333" stroke-width="1.600"/></svg>
<div class="t tb" style="left:851px;top:681px">Article</div>
<div class="sep" style="left:885px;top:676px;height:20px"></div>
<svg style="left:893px;top:680px" width="14" height="11" viewBox="0 0 14 11"><rect x=".5" y=".5" width="11" height="8" fill="none" stroke="#333"/><rect x="2.500" y="2.500" width="11" height="8" fill="#f1eee9" stroke="#333"/><path d="M4 9.500l3-4 2 2 1.500-1 2 3z" fill="#333"/></svg>
<div class="t tb" style="left:910px;top:681px">Image</div>
<div class="sep" style="left:943px;top:676px;height:20px"></div>
<svg style="left:952px;top:681px" width="13" height="9" viewBox="0 0 13 9"><path d="M1.500 1.500l5 5 5-5" fill="none" stroke="#222" stroke-width="3"/></svg>
<div class="t tb" style="left:968px;top:681px">Read More</div>

<!-- editor content -->
<div class="t" style="left:644px;top:710px;font-size:9.700px;color:#222">{module spTour1}</div>
<div class="t b" style="left:644px;top:759px;font-size:9.700px;color:#222">Please <span style="position:static;font-weight:normal;color:#2a3fa8">Click Here</span> for the full tour details.</div>

<!-- scrollbar -->
<div style="left:1258px;top:42px;width:15px;height:803px;background:#f8f6f3;border-left:1px solid #e4e1dc"></div>
<div style="left:1261px;top:45px;width:9px;height:473px;background:#bdbab6;border-radius:4.500px"></div>
<div style="left:1273px;top:42px;width:1px;height:803px;background:linear-gradient(#050505 0,#050505 42%,#a5655f 46%,#a07a70 58%,#151010 62%,#7a4040 68%,#100c0c 76%,#100c0c 90%,#7a6420 95%,#7a6420 100%)"></div>
</body></html>
